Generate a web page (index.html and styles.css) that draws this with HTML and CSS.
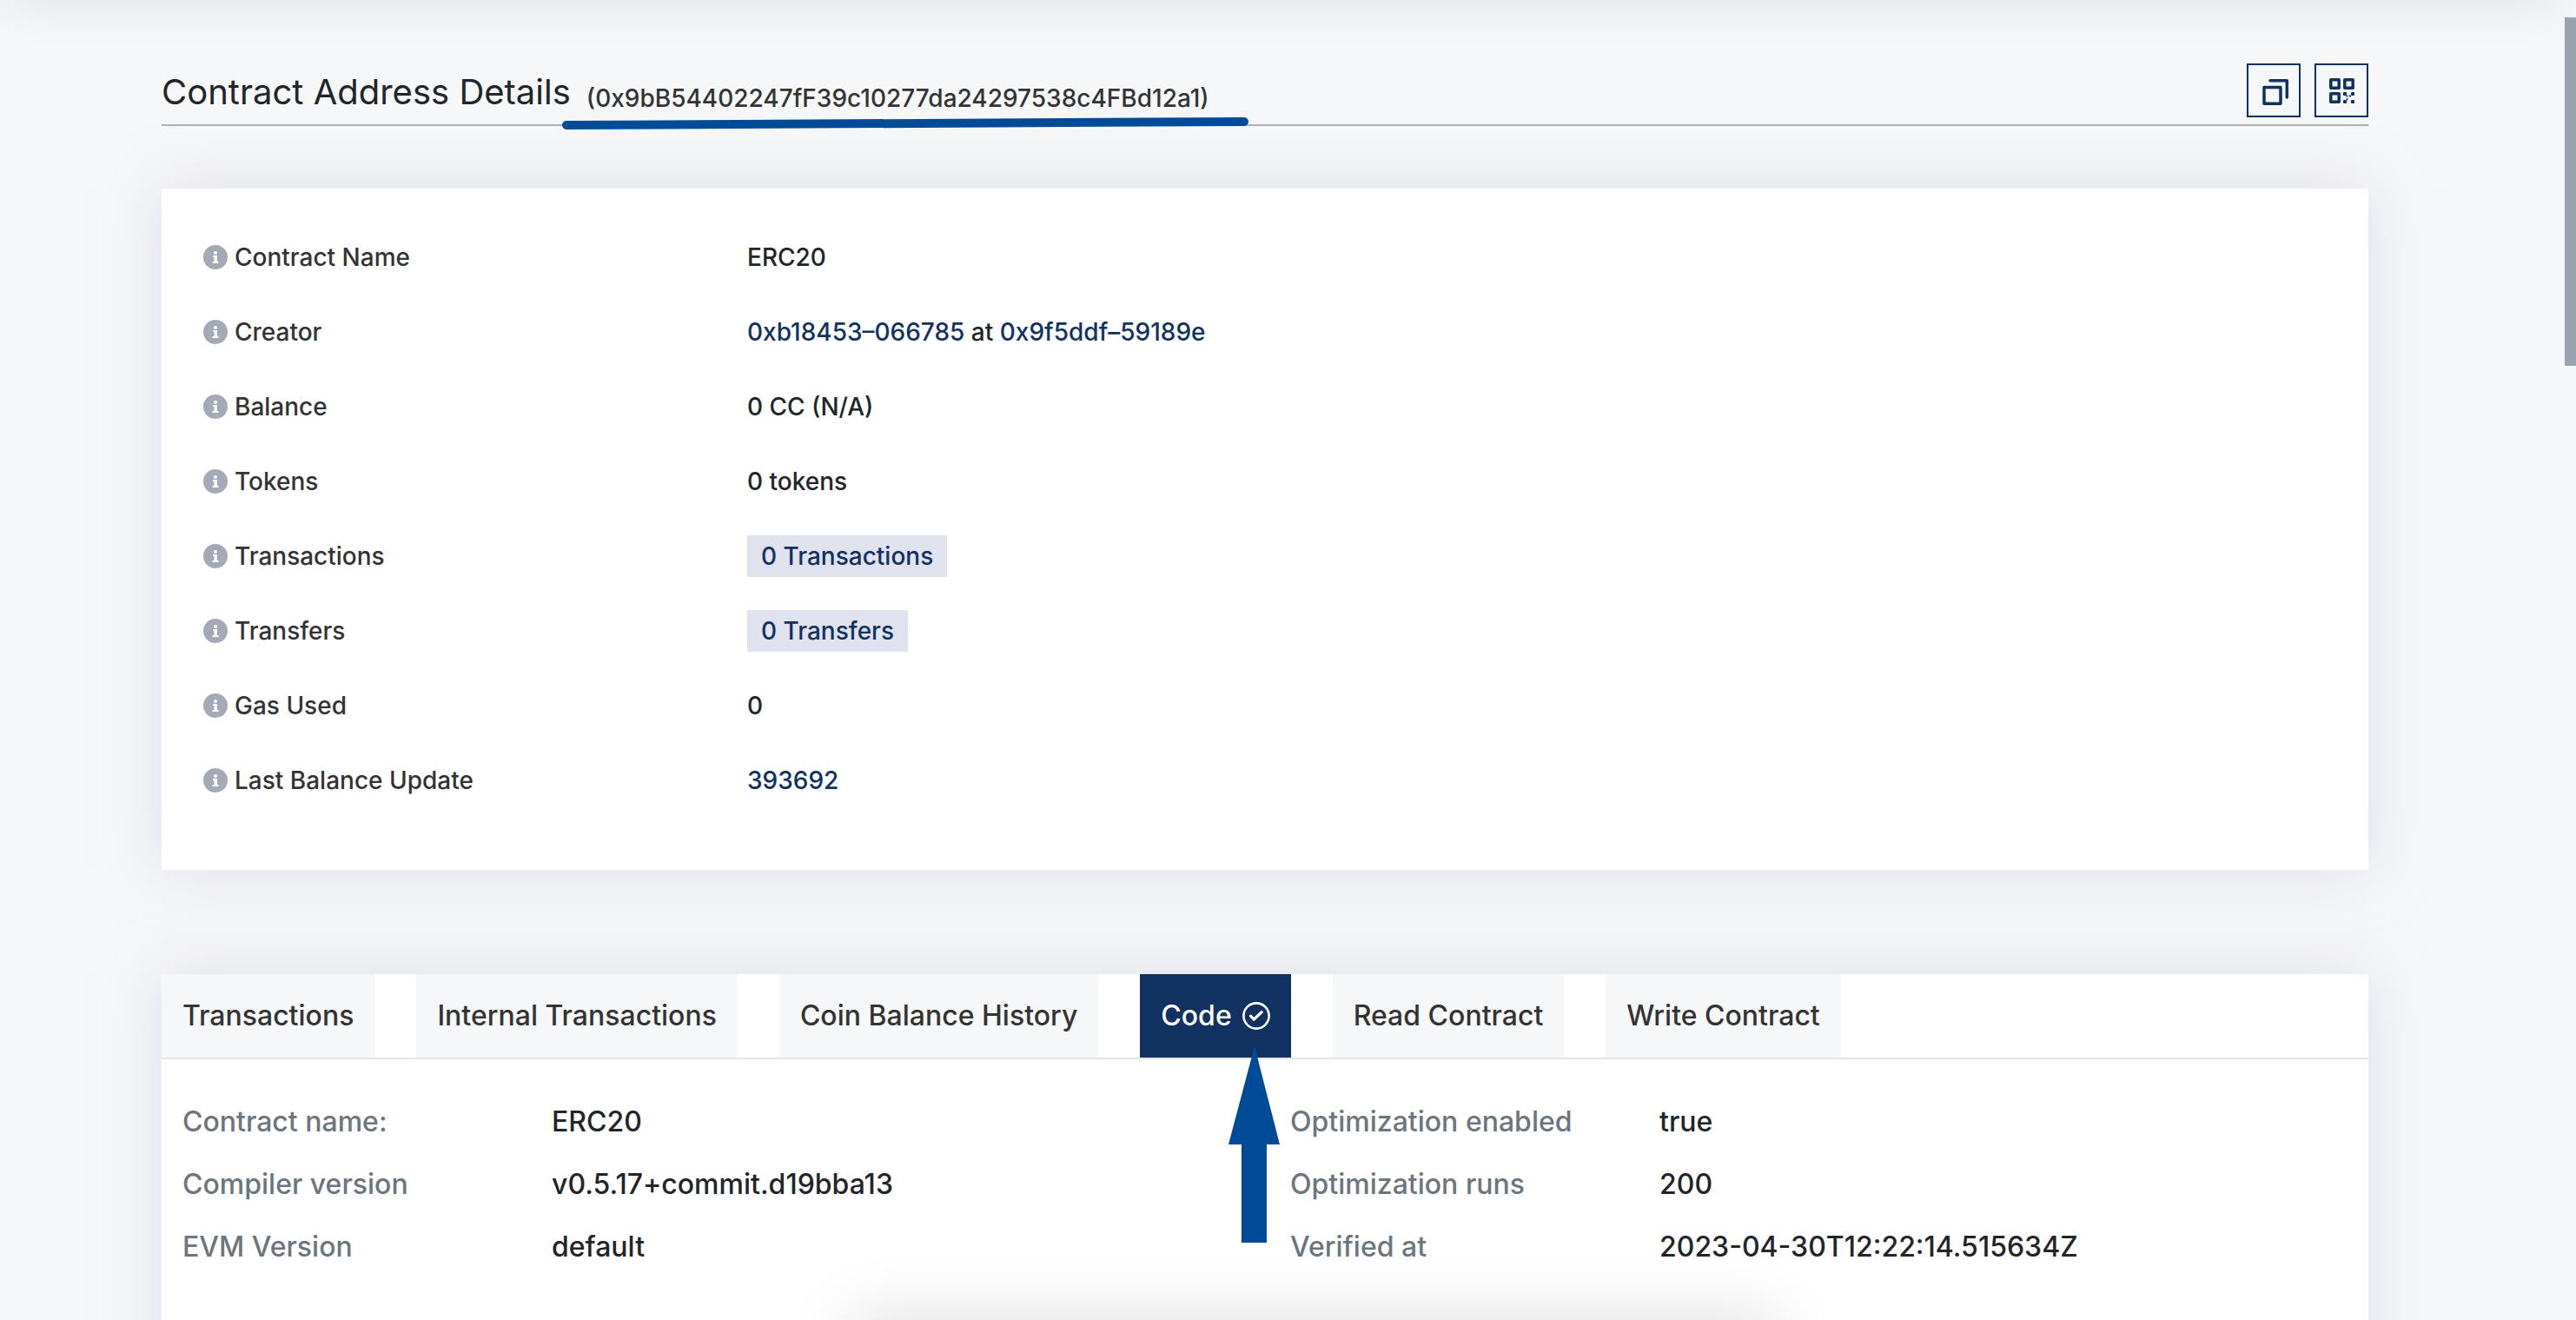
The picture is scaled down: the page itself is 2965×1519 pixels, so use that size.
FILE: index.html
```html
<!DOCTYPE html>
<html lang="en">
<head>
<meta charset="utf-8">
<meta name="viewport" content="width=device-width, initial-scale=1">
<title>Contract Address Details</title>
<link rel="stylesheet" href="styles.css">
</head>
<body>
<svg class="symbols" aria-hidden="true">
  <symbol id="info" viewBox="0 0 28 28">
    <circle cx="14" cy="14" r="14" fill="#a3a9b5"/>
    <circle cx="14" cy="9" r="2" fill="#fff"/>
    <path d="M11 12h5v7h1.500v2h-7v-2h2v-5h-1.500z" fill="#fff"/>
  </symbol>
</svg>
<div class="page">
  <div class="navbar-shadow"></div>
  <main class="container">
    <header class="heading">
      <h1 class="title">Contract Address Details</h1>
      <span class="address">(0x9bB54402247fF39c10277da24297538c4FBd12a1)
        <svg class="underline" viewBox="0 0 790 14" aria-hidden="true"><path d="M5 9L785 5" stroke="#004b98" stroke-width="10" stroke-linecap="round"/></svg>
      </span>
      <div class="actions">
        <button class="icon-button" type="button" aria-label="Copy address">
          <svg viewBox="0 0 62 62" fill="none" stroke="#113160" stroke-width="3.500" stroke-linejoin="round" stroke-linecap="round"><path d="M20 27.500h19v18.700H20z"/><path d="M27 19.800h19.300V39"/></svg>
        </button>
        <button class="icon-button" type="button" aria-label="Show QR code">
          <svg viewBox="0 0 62 62" fill="#113160"><g fill="none" stroke="#113160" stroke-width="3.500" stroke-linejoin="round"><path d="M18.800 18.800h9.400v9.400h-9.400zM34.800 18.800h9.400v9.400h-9.400zM18.800 34.800h9.400v9.400h-9.400z"/></g><rect x="33" y="33" width="4" height="4" rx="1"/><rect x="42" y="33" width="4" height="4" rx="1"/><rect x="33" y="42" width="4" height="4" rx="1"/><rect x="42" y="42" width="4" height="4" rx="1"/><rect x="36.500" y="36.500" width="2" height="2"/><rect x="40" y="36.500" width="2" height="2"/><rect x="36.500" y="40.300" width="2" height="2"/></svg>
        </button>
      </div>
    </header>

    <section class="card overview">
      <dl class="facts">
        <div class="fact"><dt><svg class="info"><use href="#info"/></svg>Contract Name</dt><dd>ERC20</dd></div>
        <div class="fact"><dt><svg class="info"><use href="#info"/></svg>Creator</dt><dd><a href="#">0xb18453–066785</a> at <a href="#">0x9f5ddf–59189e</a></dd></div>
        <div class="fact"><dt><svg class="info"><use href="#info"/></svg>Balance</dt><dd>0 CC (N/A)</dd></div>
        <div class="fact"><dt><svg class="info"><use href="#info"/></svg>Tokens</dt><dd>0 tokens</dd></div>
        <div class="fact"><dt><svg class="info"><use href="#info"/></svg>Transactions</dt><dd><a class="badge" href="#">0 Transactions</a></dd></div>
        <div class="fact"><dt><svg class="info"><use href="#info"/></svg>Transfers</dt><dd><a class="badge" href="#">0 Transfers</a></dd></div>
        <div class="fact"><dt><svg class="info"><use href="#info"/></svg>Gas Used</dt><dd>0</dd></div>
        <div class="fact"><dt><svg class="info"><use href="#info"/></svg>Last Balance Update</dt><dd><a href="#">393692</a></dd></div>
      </dl>
    </section>

    <section class="card">
      <nav class="tabs">
        <a class="tab" href="#">Transactions</a>
        <a class="tab" href="#">Internal Transactions</a>
        <a class="tab" href="#">Coin Balance History</a>
        <a class="tab active" href="#" aria-current="page">Code
          <svg class="check" viewBox="0 0 32 32" fill="none" stroke="#fff"><circle cx="16" cy="16" r="14.600" stroke-width="2.600"/><path d="M9.500 16.200l3.800 3.800 8.900-8.400" stroke-width="3.200" stroke-linecap="round" stroke-linejoin="round"/></svg>
          <svg class="arrow" viewBox="0 0 59 226" aria-hidden="true"><path d="M30 0L59 113H44V226H15V113H0z" fill="#004b98"/></svg>
        </a>
        <a class="tab" href="#">Read Contract</a>
        <a class="tab" href="#">Write Contract</a>
      </nav>
      <div class="details">
        <dl class="detail-list">
          <dt>Contract name:</dt><dd>ERC20</dd>
          <dt>Compiler version</dt><dd>v0.5.17+commit.d19bba13</dd>
          <dt>EVM Version</dt><dd>default</dd>
        </dl>
        <dl class="detail-list">
          <dt>Optimization enabled</dt><dd>true</dd>
          <dt>Optimization runs</dt><dd>200</dd>
          <dt>Verified at</dt><dd>2023-04-30T12:22:14.515634Z</dd>
        </dl>
      </div>
    </section>
  </main>
  <div class="dock-shadow"></div>
  <div class="scroll-thumb"></div>
</div>
</body>
</html>
```
FILE: styles.css
```css
* { box-sizing: border-box; }

body {
  margin: 0;
  background: #f6f7f9;
  color: #212529;
  font-family: Inter, Roboto, sans-serif;
  font-size: 28px;
  font-weight: 500;
  line-height: 40px;
}

h1, dl, dd { margin: 0; }

a {
  color: #113160;
  text-decoration: none;
}

.symbols {
  position: absolute;
  width: 0;
  height: 0;
}

.page {
  position: relative;
  height: 100vh;
  overflow: hidden;
}

.navbar-shadow {
  position: absolute;
  top: -40px;
  left: 0;
  right: 13px;
  height: 40px;
  box-shadow: 0 0 60px rgba(0, 0, 0, 0.1);
}

.container { margin: 0 239px 0 186px; }

.heading {
  display: flex;
  align-items: center;
  gap: 18px;
  margin-top: 73px;
  padding-bottom: 8px;
  border-bottom: 2px solid #b0b0b8;
}

.title {
  padding-top: 4px;
  font-size: 40px;
  font-weight: 400;
  line-height: 58px;
}

.address {
  position: relative;
  padding-top: 18px;
  color: #333;
}

.underline {
  position: absolute;
  bottom: -16px;
  left: -28px;
  width: 790px;
  height: 14px;
}

.actions {
  display: flex;
  gap: 16px;
  margin-left: auto;
}

.icon-button {
  width: 62px;
  height: 62px;
  padding: 0;
  border: 2px solid #113160;
  background: transparent;
}

.icon-button svg {
  display: block;
  width: 62px;
  height: 62px;
  margin: -2px;
}

.card {
  background: #fff;
  box-shadow: 0 0 60px rgba(202, 199, 226, 0.5);
}

.overview {
  margin: 72px 0 120px;
  padding: 36px 48px 60px;
}

.fact {
  display: grid;
  grid-template-columns: 626px 1fr;
  align-items: center;
  height: 86px;
}

.fact dt {
  display: flex;
  align-items: center;
  gap: 8px;
  color: #333;
}

.info {
  width: 28px;
  height: 28px;
}

.badge {
  display: inline-block;
  padding: 4px 16px;
  background: #e0e2ed;
}

.tabs {
  display: flex;
  gap: 48px;
  border-bottom: 2px solid #e2e4eb;
  font-size: 32px;
}

.tab {
  position: relative;
  display: flex;
  align-items: center;
  gap: 12px;
  height: 96px;
  padding: 0 24px;
  background: #f6f7f9;
  color: #333;
}

.tab.active {
  z-index: 1;
  background: #113160;
  color: #fff;
}

.check {
  width: 32px;
  height: 32px;
}

.arrow {
  position: absolute;
  top: 83px;
  left: 102px;
  width: 59px;
  height: 226px;
}

.details {
  display: grid;
  grid-template-columns: 51fr 49fr;
  padding: 36px 16px 120px 24px;
  font-size: 32px;
  line-height: 72px;
}

.detail-list {
  display: grid;
  grid-template-columns: 425px 1fr;
}

.detail-list dt { color: #6c757d; }

.dock-shadow {
  position: absolute;
  bottom: -45px;
  left: 33%;
  right: 31%;
  height: 40px;
  box-shadow: 0 0 80px rgba(0, 0, 0, 0.2);
}

.scroll-thumb {
  position: absolute;
  top: 20px;
  right: 0;
  width: 13px;
  height: 401px;
  background: #9ca3af;
}
```
